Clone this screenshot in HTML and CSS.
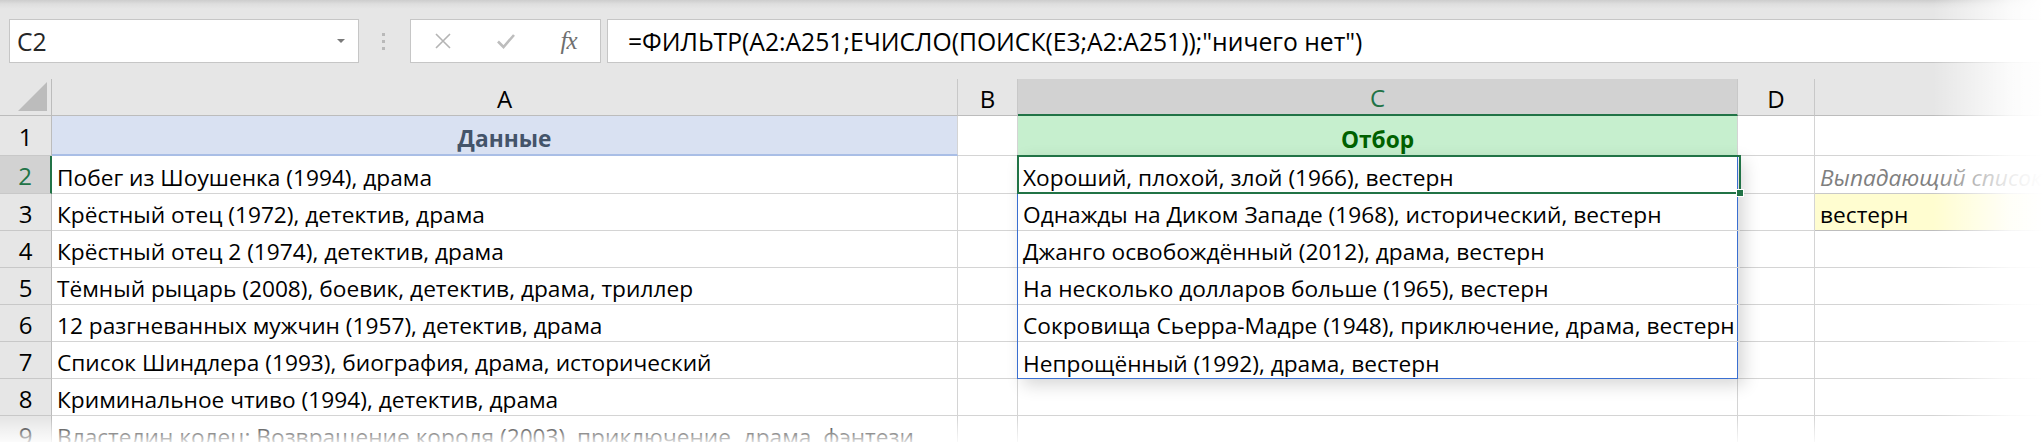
FILE: index.html
```html
<!DOCTYPE html>
<html lang="ru">
<head>
<meta charset="utf-8">
<title>Excel — ФИЛЬТР</title>
<link rel="stylesheet" href="styles.css">
</head>
<body>
<div class="app">
  <div class="formula-bar">
    <div class="namebox"><span class="ref">C2</span><span class="caret"></span></div>
    <div class="grip"><i></i><i></i><i></i></div>
    <div class="fbtns">
      <span class="fbtn"><svg width="18" height="16" viewBox="0 0 18 16"><path d="M2 1 L16 15 M16 1 L2 15" stroke="#b4b4b4" stroke-width="1.6" fill="none"/></svg></span>
      <span class="fbtn"><svg width="20" height="16" viewBox="0 0 20 16"><path d="M2 8.5 L7.5 14 L18 2" stroke="#bdbdbd" stroke-width="2.6" fill="none"/></svg></span>
      <span class="fbtn fx">fx</span>
    </div>
    <div class="formula">=ФИЛЬТР(A2:A251;ЕЧИСЛО(ПОИСК(E3;A2:A251));"ничего нет")</div>
  </div>

  <div class="sheet">
    <div class="hd corner"><svg width="30" height="30" viewBox="0 0 30 30"><path d="M0 29 L29 0 L29 29 Z" fill="#bcbcbc"/></svg></div>
    <div class="hd col">A</div>
    <div class="hd col">B</div>
    <div class="hd col sel">C</div>
    <div class="hd col">D</div>
    <div class="hd col last"></div>

    <div class="hd row">1</div>
    <div class="c h-data">Данные</div>
    <div class="c"></div>
    <div class="c h-sel">Отбор</div>
    <div class="c"></div>
    <div class="c last"></div>

    <div class="hd row sel">2</div>
    <div class="c">Побег из Шоушенка (1994), драма</div>
    <div class="c"></div>
    <div class="spill">
      <div class="sc active">Хороший, плохой, злой (1966), вестерн<span class="frame"><span class="handle"></span></span></div>
      <div class="sc">Однажды на Диком Западе (1968), исторический, вестерн</div>
      <div class="sc">Джанго освобождённый (2012), драма, вестерн</div>
      <div class="sc">На несколько долларов больше (1965), вестерн</div>
      <div class="sc">Сокровища Сьерра-Мадре (1948), приключение, драма, вестерн</div>
      <div class="sc">Непрощённый (1992), драма, вестерн</div>
    </div>
    <div class="c"></div>
    <div class="c last note">Выпадающий список</div>

    <div class="hd row">3</div>
    <div class="c">Крёстный отец (1972), детектив, драма</div>
    <div class="c"></div>
    <div class="c"></div>
    <div class="c last pick">вестерн</div>

    <div class="hd row">4</div>
    <div class="c">Крёстный отец 2 (1974), детектив, драма</div>
    <div class="c"></div>
    <div class="c"></div>
    <div class="c last"></div>

    <div class="hd row">5</div>
    <div class="c">Тёмный рыцарь (2008), боевик, детектив, драма, триллер</div>
    <div class="c"></div>
    <div class="c"></div>
    <div class="c last"></div>

    <div class="hd row">6</div>
    <div class="c">12 разгневанных мужчин (1957), детектив, драма</div>
    <div class="c"></div>
    <div class="c"></div>
    <div class="c last"></div>

    <div class="hd row">7</div>
    <div class="c">Список Шиндлера (1993), биография, драма, исторический</div>
    <div class="c"></div>
    <div class="c"></div>
    <div class="c last"></div>

    <div class="hd row">8</div>
    <div class="c">Криминальное чтиво (1994), детектив, драма</div>
    <div class="c"></div>
    <div class="c"></div>
    <div class="c"></div>
    <div class="c last"></div>

    <div class="hd row">9</div>
    <div class="c">Властелин колец: Возвращение короля (2003), приключение, драма, фэнтези</div>
    <div class="c"></div>
    <div class="c"></div>
    <div class="c"></div>
    <div class="c last"></div>
  </div>

  <div class="fade-right"></div>
  <div class="fade-bottom"></div>
</div>
</body>
</html>
```
FILE: styles.css
```css
* { box-sizing: border-box; }
html, body { margin: 0; padding: 0; background: #fff; }
body {
  font-family: "Open Sans", "Noto Sans", "DejaVu Sans", sans-serif;
  font-size: 22.7px;
  color: #000;
}
.app {
  position: relative;
  width: 2043px;
  height: 442px;
  overflow: hidden;
  background: #e6e6e6;
}

/* ---------- formula bar ---------- */
.formula-bar {
  height: 79px;
  display: flex;
  align-items: flex-start;
  padding: 19px 0 0 9px;
  font-size: 24.7px;
  background: linear-gradient(#cdcdcd 0, #dedede 4px, #e6e6e6 9px);
}
.namebox {
  width: 350px;
  height: 44px;
  flex: none;
  background: #fff;
  border: 1px solid #c6c6c6;
  display: flex;
  align-items: center;
  justify-content: space-between;
  padding: 0 13px 0 7px;
  color: #262626;
}
.caret {
  width: 0; height: 0;
  border-left: 4px solid transparent;
  border-right: 4px solid transparent;
  border-top: 4px solid #7a7a7a;
}
.grip {
  flex: none;
  height: 44px;
  margin: 0 25px 0 23px;
  display: flex;
  flex-direction: column;
  justify-content: center;
  gap: 4px;
}
.grip i { display: block; width: 3px; height: 3px; background: #b9b9b9; }
.fbtns {
  flex: none;
  width: 191px;
  height: 44px;
  background: #fff;
  border: 1px solid #c6c6c6;
  display: flex;
}
.fbtn {
  flex: 1;
  display: flex;
  align-items: center;
  justify-content: center;
}
.fx {
  font-family: "Liberation Serif", "DejaVu Serif", serif;
  font-style: italic;
  font-size: 25px;
  color: #6f6f6f;
  letter-spacing: -1px;
}
.formula {
  flex: 1;
  margin-left: 6px;
  height: 44px;
  background: #fff;
  border: 1px solid #c6c6c6;
  border-right: none;
  padding-left: 20px;
  display: flex;
  align-items: center;
  white-space: nowrap;
  color: #000;
}

/* ---------- sheet grid ---------- */
.sheet {
  display: grid;
  grid-template-columns: 52px 906px 60px 720px 77px 1fr;
  grid-template-rows: 37px 40px 38px 37px 37px 37px 37px 37px 37px 37px;
  background: #fff;
}
.hd {
  background: #e6e6e6;
  display: flex;
  align-items: center;
  justify-content: center;
  color: #000;
  font-size: 24px;
}
.hd.col {
  border-right: 1px solid #c8c8c8;
  border-bottom: 1px solid #bcbcbc;
  padding-top: 2px;
}
.hd.col.last { border-right: none; }
.hd.col.sel {
  background: #d2d2d2;
  color: #217346;
  border-bottom: 2px solid #217346;
}
.hd.corner {
  border-right: 1px solid #bcbcbc;
  border-bottom: 1px solid #bcbcbc;
  align-items: flex-end;
  justify-content: flex-end;
  padding: 0 3px 3px 0;
}
.hd.corner svg { display: block; }
.hd.row {
  border-right: 1px solid #bcbcbc;
  border-bottom: 1px solid #c8c8c8;
  padding-top: 2px;
}
.hd.row.sel {
  background: #d2d2d2;
  color: #217346;
  border-right: 2px solid #217346;
}

.c, .sc {
  border-right: 1px solid #d4d4d4;
  border-bottom: 1px solid #d4d4d4;
  padding: 0 5px 0;
  display: flex;
  align-items: flex-end;
  white-space: nowrap;
}
.c { overflow: hidden; }
.c.last { border-right: none; overflow: visible; }

.h-data {
  background: #d9e1f2;
  color: #44546a;
  font-weight: 700;
  justify-content: center;
  border-bottom: 2px solid #a9bee6;
}
.h-sel {
  background: #c6efce;
  color: #006100;
  font-weight: 700;
  justify-content: center;
}
.note {
  color: #7f7f7f;
  font-style: italic;
}
.pick {
  background: #fffdd0;
  border-top: 1px solid #c8c8c8;
  border-bottom: 1px solid #bdbdbd;
  margin-top: -1px;
}

/* spill range C2:C7 with the active cell C2 */
.spill {
  grid-row: span 6;
  display: grid;
  grid-template-rows: 38px 37px 37px 37px 37px 37px;
  margin: -1px 0 0 -1px;
  border: 1px solid #3a6fd1;
  box-shadow: 6px 6px 16px rgba(0, 0, 0, 0.16);
  background: #fff;
  position: relative;
  z-index: 1;
}
.sc { border-right: none; padding-left: 5px; }
.sc:last-child { border-bottom: none; }
.active { position: relative; }
.frame {
  position: absolute;
  left: -1px;
  top: -1px;
  right: -1px;
  bottom: -1px;
  border: 2px solid #217346;
}
.handle {
  position: absolute;
  right: -5px;
  bottom: -5px;
  width: 8px;
  height: 8px;
  background: #217346;
  border: 1px solid #fff;
}

/* photo-style fading edges */
.fade-right {
  position: absolute;
  top: 0;
  right: 0;
  width: 110px;
  height: 100%;
  z-index: 2;
  background: linear-gradient(to right, rgba(255,255,255,0) 0, rgba(255,255,255,0.85) 70%, #fff 100%);
}
.fade-bottom {
  position: absolute;
  left: 0;
  right: 0;
  bottom: 0;
  height: 24px;
  z-index: 2;
  background: linear-gradient(rgba(255,255,255,0) 0, rgba(255,255,255,0.45) 50%, rgba(255,255,255,0.85) 100%);
}
```
